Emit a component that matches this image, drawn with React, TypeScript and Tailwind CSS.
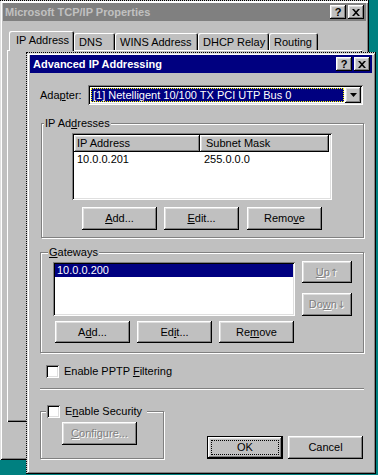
import React from "react";

const RAISED =
    "shadow-[inset_-1px_-1px_0_#000,inset_1px_1px_0_#fff,inset_-2px_-2px_0_#808080,inset_2px_2px_0_#dfdfdf]";
const SUNKEN =
    "shadow-[inset_1px_1px_0_#808080,inset_-1px_-1px_0_#fff,inset_2px_2px_0_#000,inset_-2px_-2px_0_#dfdfdf]";
const ETCHED = "border border-[#808080] shadow-[1px_1px_0_#fff,inset_1px_1px_0_#fff]";

function Btn({
    children,
    className = "",
    disabled = false,
}: {
    children: React.ReactNode;
    className?: string;
    disabled?: boolean;
}) {
    return (
        <div
            className={`flex shrink-0 items-center justify-center bg-[#c0c0c0] ${RAISED} ${
                disabled ? "text-[#808080] [text-shadow:1px_1px_0_#fff]" : "text-black"
            } ${className}`}
        >
            <span className="leading-none">{children}</span>
        </div>
    );
}

function Check() {
    return <div className={`h-[13px] w-[13px] shrink-0 bg-white ${SUNKEN}`} />;
}

function Group({
    label,
    labelLeft,
    className = "",
    children,
}: {
    label: React.ReactNode;
    labelLeft: string;
    className?: string;
    children?: React.ReactNode;
}) {
    return (
        <div className={`relative ${ETCHED} ${className}`}>
            <div className={`absolute -top-[8px] ${labelLeft} bg-[#c0c0c0] px-[1px] leading-[14px]`}>{label}</div>
            {children}
        </div>
    );
}

function CaptionButtons() {
    return (
        <div className="flex gap-[2px]">
            <div className={`flex h-[14px] w-[16px] items-center justify-center bg-[#c0c0c0] ${RAISED}`}>
                <span className="text-[11px] font-bold leading-none text-black">?</span>
            </div>
            <div className={`flex h-[14px] w-[16px] items-center justify-center bg-[#c0c0c0] ${RAISED}`}>
                <svg width="8" height="7" viewBox="0 0 8 7">
                    <path d="M0 0h2l2 2.2L6 0h2L5 3.5 8 7H6L4 4.8 2 7H0l3-3.5z" fill="#000" />
                </svg>
            </div>
        </div>
    );
}

const TABS = [
    { label: "DNS", w: "w-[41px]" },
    { label: "WINS Address", w: "w-[83px]" },
    { label: "DHCP Relay", w: "w-[71px]" },
    { label: "Routing", w: "w-[49px]" },
];

export default function App() {
    return (
        <div className="relative h-[475px] w-[378px] overflow-hidden bg-[#008080] font-['Liberation_Sans',Arial,sans-serif] text-[11px] leading-[13px] text-black">
            {/* back window */}
            <div className="absolute left-0 top-0 h-[460px] w-[369px] border-t border-dotted border-black bg-[#c0c0c0] shadow-[inset_1px_0_0_#dfdfdf,inset_-1px_-1px_0_#000,inset_2px_2px_0_#fff,inset_-2px_-2px_0_#808080]">
                <div className="mx-[3px] mt-[2px] flex h-[18px] items-center justify-between bg-[#808080] pl-[2px] pr-[2px]">
                    <span className="font-bold text-[#c0c0c0]">Microsoft TCP/IP Properties</span>
                    <CaptionButtons />
                </div>
                <div className="ml-[7px] mt-[10px]">
                    <div className="flex h-[20px] items-end pl-[2px]">
                        <div className="relative z-10 flex h-[20px] w-[65px] items-start rounded-t-[2px] bg-[#c0c0c0] pl-[7px] pt-[3px] shadow-[inset_1px_1px_0_#fff,inset_-1px_0_0_#000,inset_-2px_0_0_#808080]">
                            IP Address
                        </div>
                        {TABS.map((t) => (
                            <div
                                key={t.label}
                                className={`mb-[1px] flex h-[17px] ${t.w} items-start rounded-t-[2px] pl-[5px] pt-[3px] shadow-[inset_1px_1px_0_#fff,inset_-1px_0_0_#000,inset_-2px_0_0_#808080]`}
                            >
                                {t.label}
                            </div>
                        ))}
                    </div>
                    <div className="-mt-[1px] h-[372px] w-[355px] shadow-[inset_1px_1px_0_#fff,inset_-1px_-1px_0_#000,inset_-2px_-2px_0_#808080]" />
                </div>
            </div>

            {/* front dialog */}
            <div className="absolute left-[26px] top-[52px] h-[422px] w-[350px] border border-dotted border-black bg-[#c0c0c0] [border-right-style:solid] [border-bottom-style:solid] shadow-[inset_1px_1px_0_#dfdfdf,inset_-1px_-1px_0_#808080,inset_2px_2px_0_#fff]">
                <div className="mx-[3px] mt-[2px] flex h-[18px] items-center justify-between bg-[#000080] pl-[3px] pr-[2px]">
                    <span className="font-bold text-white">Advanced IP Addressing</span>
                    <CaptionButtons />
                </div>

                <div className="pl-[13px]">
                    {/* adapter */}
                    <div className="mt-[12px] flex h-[20px] items-center">
                        <span className="w-[48px]">
                            Ada<u>p</u>ter:
                        </span>
                        <div className={`flex h-[20px] w-[275px] bg-white p-[2px] ${SUNKEN}`}>
                            <div className="flex-1 p-[1px]">
                                <div className="flex h-full items-center border border-dotted border-[#ffff00] bg-[#000080] pl-[1px] text-white">
                                    [1] Netelligent 10/100 TX PCI UTP Bus 0
                                </div>
                            </div>
                            <div className={`flex w-[16px] items-center justify-center bg-[#c0c0c0] ${RAISED}`}>
                                <svg width="7" height="4" viewBox="0 0 7 4">
                                    <path d="M0 0h7L3.5 4z" fill="#000" />
                                </svg>
                            </div>
                        </div>
                    </div>

                    {/* IP addresses */}
                    <Group
                        labelLeft="left-[2px]"
                        className="ml-[1px] mt-[18px] h-[115px] w-[323px]"
                        label={
                            <>
                                IP Ad<u>d</u>resses
                            </>
                        }
                    >
                        <div className={`ml-[30px] mt-[9px] h-[67px] w-[260px] bg-white p-[2px] ${SUNKEN}`}>
                            <div className="flex h-[17px] bg-[#c0c0c0]">
                                <div className={`flex w-[126px] items-center pl-[3px] ${RAISED}`}>IP Address</div>
                                <div className={`flex w-[129px] items-center pl-[6px] ${RAISED}`}>Subnet Mask</div>
                                <div className="flex-1 bg-white" />
                            </div>
                            <div className="flex h-[14px] items-center">
                                <span className="w-[130px] pl-[3px]">10.0.0.201</span>
                                <span>255.0.0.0</span>
                            </div>
                        </div>
                        <div className="ml-[40px] mt-[7px] flex gap-[7px]">
                            <Btn className="h-[23px] w-[75px]">
                                <u>A</u>dd...
                            </Btn>
                            <Btn className="h-[23px] w-[75px]">
                                <u>E</u>dit...
                            </Btn>
                            <Btn className="ml-[1px] h-[23px] w-[75px]">
                                Remo<u>v</u>e
                            </Btn>
                        </div>
                    </Group>

                    {/* gateways */}
                    <Group
                        labelLeft="left-[7px]"
                        className="mt-[14px] h-[101px] w-[324px]"
                        label={
                            <>
                                <u>G</u>ateways
                            </>
                        }
                    >
                        <div className="flex items-start">
                            <div className="ml-[12px] mt-[9px]">
                                <div className={`h-[54px] w-[242px] bg-white p-[2px] ${SUNKEN}`}>
                                    <div className="flex h-[13px] items-center bg-[#000080] pl-[2px] text-white">10.0.0.200</div>
                                </div>
                                <div className="ml-[2px] mt-[5px] flex gap-[7px]">
                                    <Btn className="h-[22px] w-[75px]">
                                        A<u>d</u>d...
                                    </Btn>
                                    <Btn className="h-[22px] w-[75px]">
                                        Ed<u>i</u>t...
                                    </Btn>
                                    <Btn className="h-[22px] w-[75px]">
                                        Re<u>m</u>ove
                                    </Btn>
                                </div>
                            </div>
                            <div className="ml-[7px] mt-[8px] flex flex-col">
                                <Btn disabled className="h-[22px] w-[50px]">
                                    <u>U</u>p<span className="font-['DejaVu_Sans',sans-serif] text-[10px]">↑</span>
                                </Btn>
                                <Btn disabled className="mt-[10px] h-[23px] w-[50px]">
                                    Do<u>w</u>n<span className="font-['DejaVu_Sans',sans-serif] text-[10px]">↓</span>
                                </Btn>
                            </div>
                        </div>
                    </Group>

                    {/* PPTP */}
                    <div className="ml-[6px] mt-[12px] flex items-center">
                        <Check />
                        <span className="ml-[5px]">
                            Enable PPTP <u>F</u>iltering
                        </span>
                    </div>

                    <div className="mt-[10px] h-[2px] w-[324px] border-t border-b border-t-[#808080] border-b-white" />

                    {/* bottom */}
                    <div className="flex items-start">
                        <Group
                            labelLeft="left-[5px]"
                            className="mt-[21px] h-[48px] w-[124px]"
                            label={
                                <div className="flex items-center">
                                    <Check />
                                    <span className="ml-[5px] pr-[4px]">
                                        E<u>n</u>able Security
                                    </span>
                                </div>
                            }
                        >
                            <Btn disabled className="ml-[21px] mt-[10px] h-[23px] w-[75px]">
                                <u>C</u>onfigure...
                            </Btn>
                        </Group>
                        <div
                            className={`relative ml-[43px] mt-[46px] flex h-[23px] w-[76px] items-center justify-center border border-black bg-[#c0c0c0] ${RAISED}`}
                        >
                            <div className="absolute inset-[3px] border border-dotted border-black" />
                            <span className="leading-none">OK</span>
                        </div>
                        <Btn className="ml-[5px] mt-[46px] h-[23px] w-[75px]">Cancel</Btn>
                    </div>
                </div>
            </div>
        </div>
    );
}
